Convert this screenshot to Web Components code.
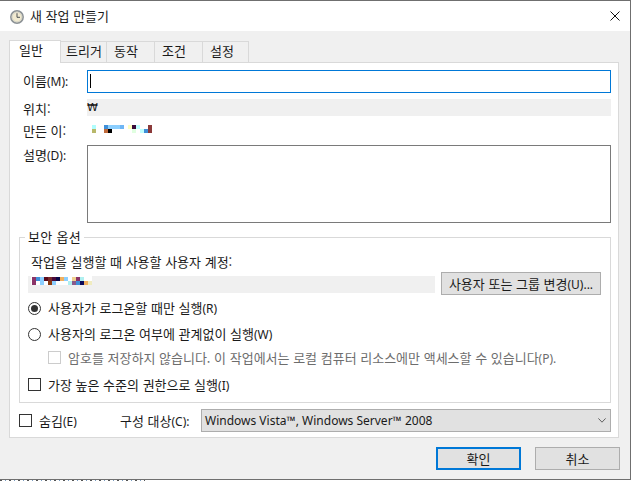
<!DOCTYPE html>
<html lang="ko">
<head>
<meta charset="utf-8">
<title>새 작업 만들기</title>
<style>
  html, body { margin: 0; padding: 0; background: #fff; }
  body { font: 13px "Noto Sans CJK KR", "Noto Sans", sans-serif; color: #1a1a1a; overflow: hidden; }
</style>
</head>
<body>
<task-dialog></task-dialog>

<script>
function define(name, html, extra) {
  const tpl = document.createElement("template");
  tpl.innerHTML = html;
  customElements.define(name, class extends HTMLElement {
    connectedCallback() {
      if (this.shadowRoot) return;
      const shadow = this.attachShadow({ mode: "open" });
      shadow.appendChild(tpl.content.cloneNode(true));
      if (extra) extra(this, shadow);
    }
  });
}

// the (M) style access keys sit in a smaller latin face than the hangul
// no whitespace in this template: the host is inline and it would show as a gap
define("access-key", `<style>:host { display: inline; font: 12px "Noto Sans", sans-serif; }</style><slot></slot>`);

define("title-bar", /* HTML */ `
  <style>
    :host { display: flex; align-items: center; height: 30px; background: #fff; padding-left: 10px; }
    svg.clock { width: 14px; height: 14px; margin-top: 2px; }
    span { margin: 0 0 2px 6px; flex: 1; }
    svg.close { width: 10px; height: 10px; margin: 0 10px 1px 0; }
  </style>
  <svg class="clock" viewBox="0 0 14 14">
    <circle cx="7" cy="7" r="6.2" fill="#e6e2d2" stroke="#8c9296" stroke-width="1.5"/>
    <circle cx="7" cy="7" r="4.8" fill="#f1ead0" stroke="#c9c9c0" stroke-width=".6"/>
    <path d="M7 3.2V7.3H10" fill="none" stroke="#4c5054" stroke-width="1"/>
  </svg>
  <span><slot></slot></span>
  <svg class="close" viewBox="0 0 10 10"><path d="M.5 .5L9.5 9.5M9.5 .5L.5 9.5" stroke="#111" stroke-width="1" fill="none"/></svg>
`);

define("tab-strip", /* HTML */ `
  <style>
    :host { display: flex; align-items: flex-end; height: 22px; }
    div {
      box-sizing: border-box; height: 21px; margin-left: -1px; background: #f0f0f0;
      border: 1px solid #d9d9d9; border-bottom: none; padding: 0 0 3px 7px;
      display: flex; align-items: center;
    }
    .on {
      height: 23px; margin: 0 0 -1px 0; background: #fff; width: 52px;
      position: relative; z-index: 1; padding: 0 0 5px 9px;
    }
  </style>
  <div class="on">일반</div>
  <div style="width:47px;padding-left:5px">트리거</div>
  <div style="width:49px">동작</div>
  <div style="width:49px">조건</div>
  <div style="width:47px">설정</div>
`);

define("form-field", /* HTML */ `
  <style>
    :host { display: grid; grid-template-columns: 77px 1fr; }
    .lab { padding-left: 13px; height: 17px; line-height: 17px; }
    .ctl { display: flex; min-width: 0; }
  </style>
  <div class="lab"><slot name="label"></slot></div>
  <div class="ctl"><slot></slot></div>
`);

define("text-input", /* HTML */ `
  <style>
    :host { display: block; flex: 1; box-sizing: border-box; height: 23px; background: #fff; border: 1px solid #0078d7; padding: 3px 2px; }
    i { display: block; width: 1px; height: 14px; background: #000; }
  </style>
  <i></i>
`);

define("read-only", /* HTML */ `
  <style>
    :host { display: flex; flex: 1; height: 17px; line-height: 18px; background: var(--ro-bg, #f0f0f0); }
  </style>
  <slot></slot>
`);

// censored names in the shot: blocks of 4px, two rows
define("pixel-mask", /* HTML */ `
  <style>
    :host { display: block; background: var(--mask-bg, #fff); }
    svg { display: block; }
  </style>
  <svg></svg>
`, (el, shadow) => {
  const rows = el.getAttribute("data-px").split("|").map(r => r.split(" "));
  const top = +(el.getAttribute("data-top") || 0);
  const w = rows[0].length * 4;
  const svg = shadow.querySelector("svg");
  svg.setAttribute("width", w);
  svg.setAttribute("height", top + rows.length * 4);
  let out = "";
  rows.forEach((row, y) => row.forEach((c, x) => {
    if (c !== "-") out += `<rect x="${x * 4}" y="${top + y * 4}" width="4" height="4" fill="#${c}"/>`;
  }));
  svg.innerHTML = out;
});

define("desc-box", /* HTML */ `
  <style>
    :host { display: block; flex: 1; box-sizing: border-box; height: 78px; background: #fff; border: 1px solid #7a7a7a; }
  </style>
`);

define("push-button", /* HTML */ `
  <style>
    :host {
      display: flex; align-items: center; justify-content: center; box-sizing: border-box;
      height: 23px; background: #e1e1e1; border: 1px solid #adadad;
    }
    :host([primary]) { border: 2px solid #0078d7; }
  </style>
  <span><slot></slot></span>
`);

define("check-row", /* HTML */ `
  <style>
    :host { display: flex; align-items: center; height: 17px; }
    .box { box-sizing: border-box; width: 13px; height: 13px; border: 1px solid #333; background: #fff; margin-right: 7px; flex: none; }
    :host([type="radio"]) .box { border-radius: 50%; display: flex; align-items: center; justify-content: center; }
    :host([checked]) .box::after { content: ""; width: 7px; height: 7px; border-radius: 50%; background: #333; }
    :host([disabled]) { color: #6d6d6d; }
    :host([disabled]) .box { border-color: #cccccc; }
    span { margin-bottom: 1px; }
  </style>
  <div class="box"></div>
  <span><slot></slot></span>
`);

define("combo-box", /* HTML */ `
  <style>
    :host {
      display: flex; align-items: center; box-sizing: border-box; height: 23px;
      background: #e1e1e1; border: 1px solid #adadad; padding: 0 4px 0 3px;
      font: 12px "Noto Sans", sans-serif;
    }
    span { flex: 1; }
    svg { width: 8px; height: 5px; }
  </style>
  <span><slot></slot></span>
  <svg viewBox="0 0 8 5"><path d="M.4 .4L4 4.2L7.6 .4" fill="none" stroke="#606060" stroke-width="1"/></svg>
`);

define("security-group", /* HTML */ `
  <style>
    :host {
      display: block; position: relative; box-sizing: border-box;
      border: 1px solid #d9d9d9; padding: 15px 0 9px 8px;
    }
    .legend { position: absolute; left: 5px; top: -10px; background: #fff; padding: 0 3px; line-height: 18px; letter-spacing: .3px; }
    .who { padding-left: 3px; height: 17px; line-height: 17px; }
    .account { display: flex; align-items: flex-end; margin-top: 2px; }
    .field { width: 407px; height: 17px; background: #f0f0f0; margin-bottom: 2px; position: relative; }
    pixel-mask { position: absolute; left: 4px; top: -3px; --mask-bg: transparent; }
    .mask-white { position: absolute; left: 3px; top: -3px; width: 61px; height: 12px; background: #fff; }
    push-button { width: 160px; margin-left: 6px; }
    .r1 { margin-top: 4px; height: 18px; }
    .r2 { margin-top: 8px; height: 18px; }
    .r3 { margin: 6px 0 0 20px; }
    .r4 { margin-top: 10px; }
  </style>
  <div class="legend">보안 옵션</div>
  <div class="who">작업을 실행할 때 사용할 사용자 계정:</div>
  <div class="account">
    <div class="field">
      <div class="mask-white"></div>
      <pixel-mask data-top="4" data-px="8a3468 3f8fd8 8ccfff 5a0a1a 7a2a2a 4a0a3a 0a0a4a f0b060 8ccfff - f0d090 8a3468 b0f0f0 - -|8a3468 - 8ccfff - 8b3a10 8ccfff - - - b0f0f0 8a5a8a 3f8fd8 0a0a5a f0b060 f0ecc0"></pixel-mask>
    </div>
    <push-button>사용자 또는 그룹 변경<access-key>(U)...</access-key></push-button>
  </div>
  <check-row class="r1" type="radio" checked>사용자가 로그온할 때만 실행<access-key>(R)</access-key></check-row>
  <check-row class="r2" type="radio">사용자의 로그온 여부에 관계없이 실행<access-key>(W)</access-key></check-row>
  <check-row class="r3" disabled>암호를 저장하지 않습니다. 이 작업에서는 로컬 컴퓨터 리소스에만 액세스할 수 있습니다<access-key>(P).</access-key></check-row>
  <check-row class="r4">가장 높은 수준의 권한으로 실행<access-key>(I)</access-key></check-row>
`);

define("general-tab", /* HTML */ `
  <style>
    :host {
      display: block; box-sizing: border-box; height: 376px; background: #fff;
      border: 1px solid #d9d9d9; padding: 7px 7px 5px 0;
    }
    form-field span { display: block; }
    .name span { padding-top: 2px; }
    .loc { margin-top: 6px; }
    .loc span, .by span { padding-top: 1px; }
    .loc read-only { font: 11px/18px "DejaVu Sans", sans-serif; }
    .by { margin-top: 5px; }
    .by read-only { --ro-bg: transparent; }
    .by pixel-mask { margin: 4px 0 0 5px; }
    .desc { margin-top: 7px; }
    .desc span { padding-top: 1px; }
    security-group { margin: 14px 0 0 9px; }
    .bottom { display: flex; align-items: center; margin: 6px 0 0 9px; }
    .bottom check-row { width: 101px; }
    .bottom .target { width: 81px; padding-bottom: 1px; }
    .bottom combo-box { flex: 1; }
  </style>
  <form-field class="name"><span slot="label">이름<access-key>(M):</access-key></span><text-input></text-input></form-field>
  <form-field class="loc"><span slot="label">위치:</span><read-only>₩</read-only></form-field>
  <form-field class="by"><span slot="label">만든 이:</span><read-only>
    <pixel-mask data-px="b0fdfd - - 3f8fd8 8ccfff 8ccfff 8ccfff 6fb6f5 - ffffc0 3a0a3a c0ffff - - 8b3a3a|b8b86a - - c06a3a 000000 - - - - - e0ffe0 - c0ffff 3f8fd8 8b3a3a"></pixel-mask>
  </read-only></form-field>
  <form-field class="desc"><span slot="label">설명<access-key>(D):</access-key></span><desc-box></desc-box></form-field>
  <security-group></security-group>
  <div class="bottom">
    <check-row>숨김<access-key>(E)</access-key></check-row>
    <div class="target">구성 대상<access-key>(C):</access-key></div>
    <combo-box>Windows Vista™, Windows Server™ 2008</combo-box>
  </div>
`);

define("task-dialog", /* HTML */ `
  <style>
    :host { display: block; width: 631px; height: 481px; box-sizing: border-box; overflow: hidden; }
    .frame { box-sizing: border-box; height: 480px; border-top: 1px solid #6f6f6f; border-bottom: 1px solid #6f6f6f; border-right: 1px solid #6f6f6f; background: #f0f0f0; }
    .body { padding: 9px 11px 0 9px; }
    .foot { display: flex; justify-content: flex-end; gap: 14px; margin: 9px -1px 0 0; }
    .foot push-button { width: 85px; }
    .rest { height: 1px; width: 145px; background: repeating-linear-gradient(90deg, #555 0 2px, #fff 2px 5px, #7a9cc0 5px 6px, #fff 6px 9px); }
  </style>
  <div class="frame">
    <title-bar>새 작업 만들기</title-bar>
    <div class="body">
      <tab-strip></tab-strip>
      <general-tab></general-tab>
      <div class="foot">
        <push-button primary>확인</push-button>
        <push-button>취소</push-button>
      </div>
    </div>
  </div>
  <div class="rest"></div>
`);
</script>
</body>
</html>
